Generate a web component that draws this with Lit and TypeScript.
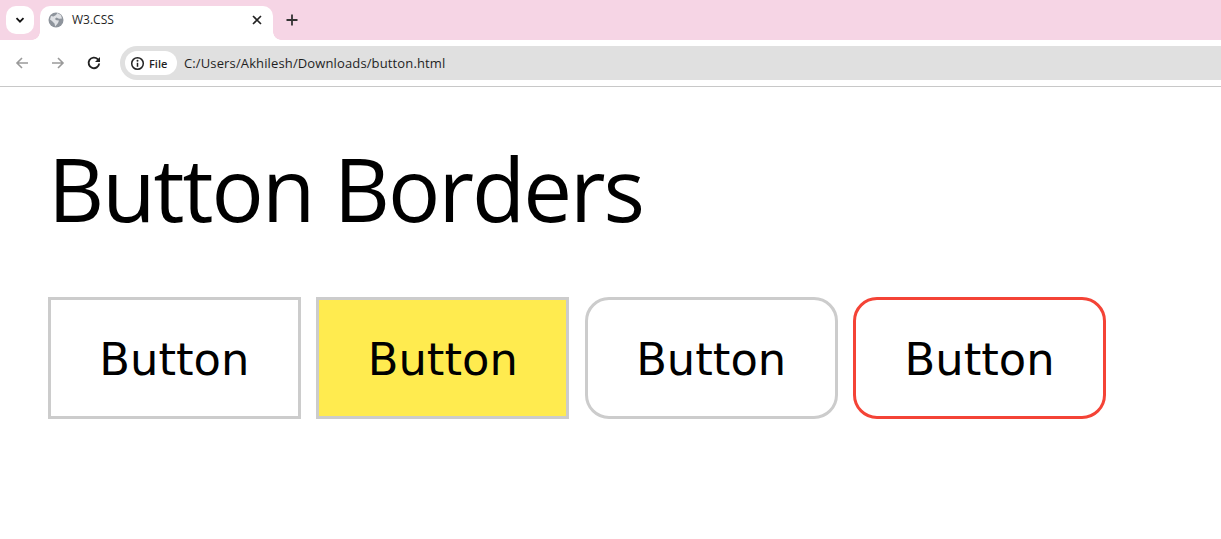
import { LitElement, html, css } from "lit";
import { customElement } from "lit/decorators.js";

@customElement("app-root")
export class AppRoot extends LitElement {
  static styles = css`
    :host { display: block; width: 1221px; height: 539px; background: #fff; overflow: hidden; font-family: "Open Sans", "Noto Sans", sans-serif; color: #000; }
    .strip { height: 40px; background: #f6d5e5; display: flex; align-items: flex-start; box-sizing: border-box; padding: 6px 0 0 6px; }
    .tabsearch { width: 28px; height: 28px; background: #fff; border-radius: 10px; display: flex; align-items: center; justify-content: center; }
    .tab { position: relative; margin-left: 6px; width: 233px; height: 34px; background: #fff; border-radius: 10px 10px 0 0; display: flex; align-items: center; box-sizing: border-box; padding: 0 9px 6px 8px; }
    .tab::before, .tab::after { content: ""; position: absolute; bottom: 0; width: 8px; height: 8px; }
    .tab::before { left: -8px; background: radial-gradient(circle at 0 0, #f6d5e5 7.5px, #fff 8px); }
    .tab::after { right: -8px; background: radial-gradient(circle at 100% 0, #f6d5e5 7.5px, #fff 8px); }
    .title { margin-left: 8px; font: 12px/16px "Open Sans", sans-serif; color: #1f1f1f; flex: 1; }
    .plus { margin-left: 11px; margin-top: 6px; display: flex; }
    .bar { height: 46px; background: #fff; border-radius: 8px 0 0 0; display: flex; align-items: center; padding-left: 14px; box-sizing: border-box; }
    .nav { display: flex; gap: 20px; align-items: center; }
    .omni { margin-left: 18px; flex: 1; height: 34px; background: #e0e0e0; border-radius: 17px 0 0 17px; display: flex; align-items: center; padding-left: 5px; }
    .chip { height: 24px; width: 52px; box-sizing: border-box; background: #fff; border-radius: 12px; display: flex; align-items: center; padding-left: 5px; gap: 4px; font: 600 11px "Open Sans", sans-serif; color: #1f1f1f; }
    .url { margin-left: 7px; font: 13px "Open Sans", sans-serif; color: #1f1f1f; letter-spacing: 0.13px; }
    .rule { height: 1px; background: #c8c8c8; }
    main { padding: 49px 0 0 48px; }
    h1 { margin: 0; font: 400 87px/104px "Open Sans", sans-serif; letter-spacing: -2px; }
    .buttons { display: flex; gap: 15.6px; margin-top: 57px; }
    .btn { width: 252.8px; height: 122px; box-sizing: border-box; border: 3px solid #ccc; padding-top: 2px; background: #fff; display: flex; align-items: center; justify-content: center; font: 44.8px "DejaVu Sans", Verdana, sans-serif; }
    .yellow { background: #ffeb4f; }
    .round { border-radius: 24px; }
    .red { border-color: #f44336; }
  `;

  render() {
    return html`
      <div class="strip">
        <div class="tabsearch">
          <svg width="12" height="12" viewBox="0 0 12 12"><path d="M2.5 4.2 6 7.7l3.5-3.5" fill="none" stroke="#111" stroke-width="1.8"/></svg>
        </div>
        <div class="tab">
          <svg width="16" height="16" viewBox="0 0 16 16">
            <circle cx="8" cy="8" r="7.5" fill="#8e949c"/>
            <path d="M9.5 1 13 3.2 14 6.5 11 6.8 8.5 5.5 6.8 7 8.5 8.2 11 8.5 10 11 7.2 14.5 6.5 11.5 4 9 2 7.5 3 4 5.5 4.5 8 3z" fill="#dfe1e5"/>
          </svg>
          <span class="title">W3.CSS</span>
          <svg width="14" height="14" viewBox="0 0 14 14"><path d="M3 3l8 8M11 3l-8 8" stroke="#222" stroke-width="1.6"/></svg>
        </div>
        <div class="plus">
          <svg width="16" height="16" viewBox="0 0 16 16"><path d="M8 2.5v11M2.5 8h11" stroke="#333" stroke-width="1.8"/></svg>
        </div>
      </div>
      <div class="bar">
        <div class="nav">
          <svg width="16" height="16" viewBox="0 0 16 16"><path d="M14 8H3M8 3 3 8l5 5" fill="none" stroke="#9a9a9a" stroke-width="1.6"/></svg>
          <svg width="16" height="16" viewBox="0 0 16 16"><path d="M2 8h11M8 3l5 5-5 5" fill="none" stroke="#9a9a9a" stroke-width="1.6"/></svg>
          <svg width="16" height="16" viewBox="0 0 16 16"><path d="M13.2 8.5A5.3 5.3 0 1 1 11.7 4.2L13.2 5.8" fill="none" stroke="#222" stroke-width="1.9"/><path d="M14 2v5H9z" fill="#222"/></svg>
        </div>
        <div class="omni">
          <div class="chip">
            <svg width="15" height="15" viewBox="0 0 15 15"><circle cx="7.5" cy="7.5" r="5.8" fill="none" stroke="#222" stroke-width="1.5"/><path d="M7.5 6.8v4" stroke="#222" stroke-width="1.5"/><circle cx="7.5" cy="4.8" r="1" fill="#222"/></svg>
            <span>File</span>
          </div>
          <span class="url">C:/Users/Akhilesh/Downloads/button.html</span>
        </div>
      </div>
      <div class="rule"></div>
      <main>
        <h1>Button Borders</h1>
        <div class="buttons">
          <div class="btn">Button</div>
          <div class="btn yellow">Button</div>
          <div class="btn round">Button</div>
          <div class="btn round red">Button</div>
        </div>
      </main>
    `;
  }
}
